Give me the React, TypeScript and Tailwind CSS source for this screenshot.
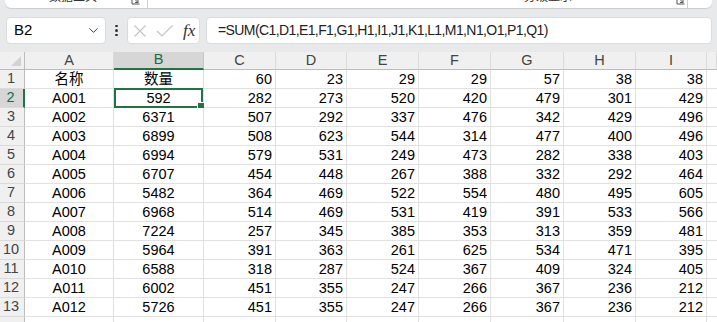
import { ChevronDown } from 'lucide-react';

const cols = ['A', 'B', 'C', 'D', 'E', 'F', 'G', 'H', 'I', ''];

const rows: (string | number)[][] = [
  ['名称', '数量', 60, 23, 29, 29, 57, 38, 38],
  ['A001', 592, 282, 273, 520, 420, 479, 301, 429],
  ['A002', 6371, 507, 292, 337, 476, 342, 429, 496],
  ['A003', 6899, 508, 623, 544, 314, 477, 400, 496],
  ['A004', 6994, 579, 531, 249, 473, 282, 338, 403],
  ['A005', 6707, 454, 448, 267, 388, 332, 292, 464],
  ['A006', 5482, 364, 469, 522, 554, 480, 495, 605],
  ['A007', 6968, 514, 469, 531, 419, 391, 533, 566],
  ['A008', 7224, 257, 345, 385, 353, 313, 359, 481],
  ['A009', 5964, 391, 363, 261, 625, 534, 471, 395],
  ['A010', 6588, 318, 287, 524, 367, 409, 324, 405],
  ['A011', 6002, 451, 355, 247, 266, 367, 236, 212],
  ['A012', 5726, 451, 355, 247, 266, 367, 236, 212],
  ['', '', '', '', '', '', '', '', '']
];

const font = { fontFamily: '"Liberation Sans", "Noto Sans CJK SC", sans-serif' };

const Launcher = () => (
  <svg width="9" height="9" viewBox="0 0 9 9" className="-mt-[4px]">
    <path d="M1 0.5 V8 H8.5" fill="none" stroke="#555" strokeWidth="1" />
    <path d="M3 2.5 L7 6.5 M7 3.5 V6.5 H4" fill="none" stroke="#555" strokeWidth="1" />
  </svg>
);

const App = () => {
  return (
    <div
      className="w-[717px] h-[322px] overflow-hidden bg-[#e8e9eb] text-black"
      style={font}
    >
      {/* ribbon bottom edge */}
      <div className="mx-[5px] h-[8px] bg-white rounded-b-md shadow-[0_1px_1px_rgba(0,0,0,0.12)] overflow-hidden flex items-start text-[12px] text-[#333]">
        <span className="ml-[44px] -mt-[11px] leading-[16px]">数据工具</span>
        <span className="ml-[34px]">
          <Launcher />
        </span>
        <span className="ml-[7px] w-px h-[8px] bg-[#d0d0d0]" />
        <span className="ml-[376px] -mt-[11px] leading-[16px]">分级显示</span>
        <span className="ml-[104px]">
          <Launcher />
        </span>
        <span className="ml-[2px] w-px h-[8px] bg-[#d0d0d0]" />
      </div>

      {/* formula bar */}
      <div className="flex items-center h-[27px] mt-[9px] pl-[6px] pr-[5px]">
        <div className="w-[100px] h-full bg-white rounded-[4px] border border-[#dcdcdc] flex items-center pl-[7px] pr-[4px] text-[15px]">
          <span className="flex-1">B2</span>
          <ChevronDown size={15} strokeWidth={1.6} className="text-[#444]" />
        </div>
        <div className="w-[21px] flex flex-col items-center gap-[2px]">
          <span className="w-[2.5px] h-[2.5px] rounded-full bg-[#333]" />
          <span className="w-[2.5px] h-[2.5px] rounded-full bg-[#333]" />
          <span className="w-[2.5px] h-[2.5px] rounded-full bg-[#333]" />
        </div>
        <div className="w-[73px] h-full bg-white rounded-[4px] border border-[#dcdcdc] flex items-center pl-[5px]">
          <svg width="14" height="14" viewBox="0 0 14 14">
            <path d="M1.5 1.5 L12.5 12.5 M12.5 1.5 L1.5 12.5" stroke="#c4c4c4" strokeWidth="1.1" />
          </svg>
          <svg width="18" height="14" viewBox="0 0 18 14" className="ml-[9px]">
            <path d="M1 7 L6 12 L16.5 1.5" fill="none" stroke="#c4c4c4" strokeWidth="1.1" />
          </svg>
          <span
            className="ml-[9px] text-[17px] italic text-[#333] leading-none"
            style={{ fontFamily: '"Liberation Serif", serif' }}
          >
            fx
          </span>
        </div>
        <div className="flex-1 ml-[6px] h-full bg-white rounded-[4px] border border-[#dcdcdc] flex items-center pl-[11px] text-[14px] tracking-[-0.6px] text-[#222]">
          =SUM(C1,D1,E1,F1,G1,H1,I1,J1,K1,L1,M1,N1,O1,P1,Q1)
        </div>
      </div>

      {/* grid */}
      <div className="mt-[8px] grid grid-cols-[25px_89px_90px_72px_71px_72px_72px_73px_72px_71px_1fr] text-[14.5px]">
        <div className="h-[18px] bg-[#f0f0f0] border-r border-b border-[#bdbdbd] flex items-end justify-end pr-[3px] pb-[3px]">
          <svg width="10" height="10" viewBox="0 0 10 10">
            <path d="M10 0 L10 10 L0 10 Z" fill="#d2d2d2" />
          </svg>
        </div>
        {cols.map((c) => (
          <div
            key={`h-${c}`}
            className={`h-[18px] flex items-center justify-center border-r ${
              c === 'B'
                ? 'bg-[#d6d6d6] border-r-[#c8c8c8] border-b-2 border-b-[#217346] text-[#1d6b40]'
                : 'bg-[#f0f0f0] border-r-[#dadada] border-b border-b-[#bdbdbd] text-[#444]'
            }`}
          >
            {c}
          </div>
        ))}

        {rows.map((row, i) => (
          <div key={`r-${i}`} className="contents">
            <div
              className={`h-[19px] flex items-center justify-center pr-[2px] border-b border-b-[#dadada] text-[14.5px] ${
                i === 1
                  ? 'bg-[#d6d6d6] border-r-2 border-r-[#217346] text-[#1d6b40]'
                  : 'bg-[#f0f0f0] border-r border-r-[#bdbdbd] text-[#444]'
              }`}
            >
              {i < 13 ? i + 1 : ''}
            </div>
            {row.map((v, j) => (
              <div
                key={`c-${i}-${j}`}
                className={`relative h-[19px] flex items-center border-r border-b border-[#e1e1e1] bg-white leading-none ${
                  j < 2 ? 'justify-center' : 'justify-end pr-[3px]'
                }`}
              >
                {v}
                {i === 1 && j === 1 && (
                  <div className="absolute -top-[1px] left-0 right-0 -bottom-[1px] border-2 border-[#217346]">
                    <span className="absolute -right-[4px] -bottom-[4px] w-[8px] h-[8px] bg-[#217346] border border-white" />
                  </div>
                )}
              </div>
            ))}
            <div className="h-[19px] border-b border-[#e1e1e1] bg-white" />
          </div>
        ))}
      </div>
    </div>
  );
};

export default App;
